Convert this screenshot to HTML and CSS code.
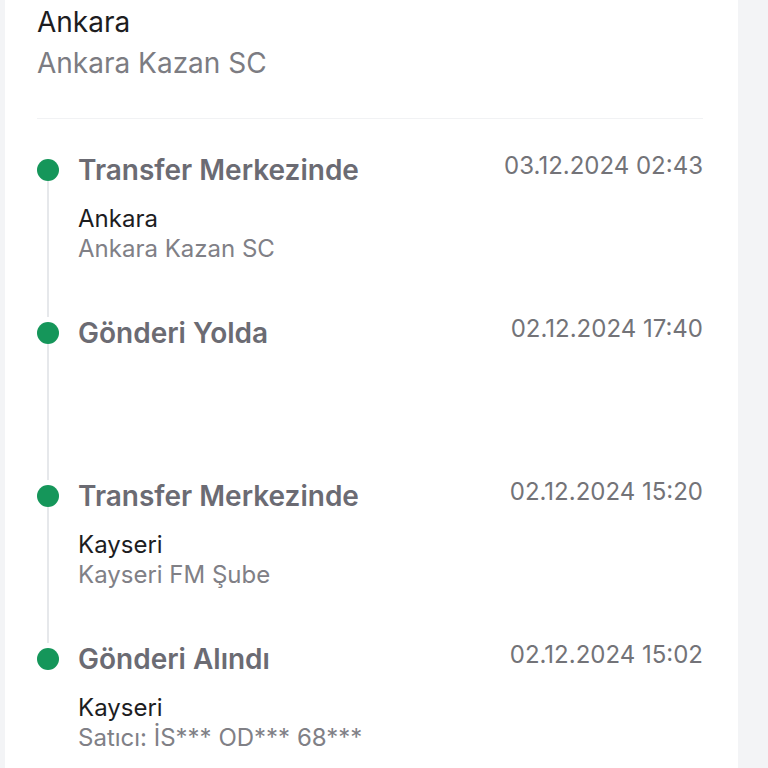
FILE: index.html
```html
<!DOCTYPE html>
<html lang="tr">

<head>
  <meta charset="UTF-8">
  <meta name="viewport" content="width=device-width, initial-scale=1.0">
  <title>Gönderi Takip</title>
  <link rel="stylesheet" href="styles.css">
</head>

<body>
  <div class="card">
    <div class="current">
      <p class="current-city">Ankara</p>
      <p class="current-branch">Ankara Kazan SC</p>
    </div>

    <ul class="timeline">
      <li class="step">
        <div class="rail"><span class="dot"></span><span class="line"></span></div>
        <div class="info">
          <h3 class="status">Transfer Merkezinde</h3>
          <p class="city">Ankara</p>
          <p class="branch">Ankara Kazan SC</p>
        </div>
        <time class="date">03.12.2024 02:43</time>
      </li>
      <li class="step">
        <div class="rail"><span class="dot"></span><span class="line"></span></div>
        <div class="info">
          <h3 class="status">Gönderi Yolda</h3>
        </div>
        <time class="date">02.12.2024 17:40</time>
      </li>
      <li class="step">
        <div class="rail"><span class="dot"></span><span class="line"></span></div>
        <div class="info">
          <h3 class="status">Transfer Merkezinde</h3>
          <p class="city">Kayseri</p>
          <p class="branch">Kayseri FM Şube</p>
        </div>
        <time class="date">02.12.2024 15:20</time>
      </li>
      <li class="step">
        <div class="rail"><span class="dot"></span><span class="line"></span></div>
        <div class="info">
          <h3 class="status">Gönderi Alındı</h3>
          <p class="city">Kayseri</p>
          <p class="branch">Satıcı: İS*** OD*** 68***</p>
        </div>
        <time class="date">02.12.2024 15:02</time>
      </li>
    </ul>
  </div>
</body>

</html>
```

FILE: styles.css
```css
body {
  margin: 0;
  padding-left: 5px;
  background-color: #f3f4f6;
  font-family: Inter, "Noto Sans", sans-serif;
}

p,
h3 {
  margin: 0;
}

.card {
  width: 733px;
  min-height: 768px;
  box-sizing: border-box;
  padding: 5px 35px 0 32px;
  background-color: #fff;
}

/* bloc du haut */
.current {
  display: flex;
  flex-direction: column;
  gap: 7px;
  padding-bottom: 38px;
  border-bottom: 1px solid #f1f2f4;
}

.current-city {
  font-size: 28px;
  line-height: 34px;
  color: #1d1d1f;
}

.current-branch {
  font-size: 28px;
  line-height: 34px;
  color: #7c7c82;
}

/* timeline */
.timeline {
  list-style: none;
  margin: 35px 0 0;
  padding: 0;
}

.step {
  display: grid;
  grid-template-columns: 22px 1fr auto;
  column-gap: 19px;
  min-height: 163px;
}

.rail {
  display: flex;
  flex-direction: column;
  align-items: center;
  padding-top: 5px;
}

.dot {
  width: 22px;
  height: 22px;
  border-radius: 50%;
  background-color: #15965a;
  flex-shrink: 0;
}

.line {
  flex: 1;
  width: 2px;
  background-color: #e6e8eb;
}

.step:last-child .line {
  display: none;
}

.status {
  font-size: 28px;
  line-height: 32px;
  font-weight: 600;
  color: #6b6b73;
  margin-bottom: 18px;
}

.city {
  font-size: 24px;
  line-height: 30px;
  color: #1d1d1f;
}

.branch {
  font-size: 24px;
  line-height: 30px;
  color: #808086;
}

.date {
  font-size: 24px;
  line-height: 24px;
  color: #737378;
}
```
